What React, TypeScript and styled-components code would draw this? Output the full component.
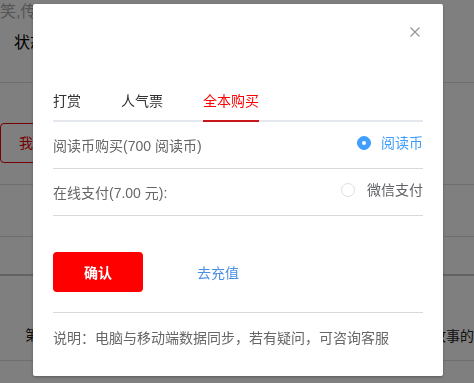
import React from "react";
import styled, { createGlobalStyle } from "styled-components";

const Global = createGlobalStyle`
  html, body { margin: 0; padding: 0; }
  body {
    font-family: "Liberation Sans", "Noto Sans CJK SC", sans-serif;
    background: #fff;
  }
`;

const Page = styled.div`
  width: 474px;
  height: 383px;
  overflow: hidden;
  background: #fff;
  display: flex;
  flex-direction: column;
  & > * { flex-shrink: 0; }
`;

const PageHeader = styled.div`
  height: 82px;
  border-bottom: 1px solid #ddd;
  display: flex;
  flex-direction: column;
`;

const Intro = styled.div`
  height: 24px;
  line-height: 24px;
  font-size: 16px;
  color: #aaa;
  white-space: nowrap;
`;

const Status = styled.div`
  margin-top: 8px;
  padding-left: 14px;
  height: 22px;
  line-height: 22px;
  font-size: 16px;
  color: #000;
`;

const TabSection = styled.div`
  padding-top: 40px;
  height: 61px;
`;

const ChapterTab = styled.div`
  width: 120px;
  height: 38px;
  border: 1px solid #e00;
  border-radius: 4px;
  box-sizing: content-box;
  padding-left: 18px;
  line-height: 38px;
  font-size: 14px;
  color: #e00;
`;

const ListRow = styled.div<{ $h: number; $thick?: boolean }>`
  height: ${(p) => p.$h}px;
  border-top: ${(p) => (p.$thick ? 2 : 1)}px solid ${(p) => (p.$thick ? "#c4c4c4" : "#ddd")};
  display: flex;
  justify-content: space-between;
  align-items: flex-end;
  font-size: 14px;
  color: #222;
  white-space: nowrap;
`;

const ChapterTitle = styled.span`
  padding-left: 25px;
  line-height: 20px;
  margin-bottom: 15px;
`;

const ChapterTail = styled.span`
  line-height: 20px;
  margin-bottom: 14px;
`;

const Overlay = styled.div`
  position: fixed;
  inset: 0;
  background: rgba(0, 0, 0, 0.5);
`;

const Dialog = styled.div`
  position: fixed;
  left: 33px;
  top: 4px;
  width: 410px;
  height: 372px;
  box-sizing: border-box;
  background: #fff;
  border-radius: 2px;
  box-shadow: 0 1px 3px rgba(0, 0, 0, 0.3);
  display: flex;
  flex-direction: column;
  font-family: "Liberation Sans", "Noto Sans CJK SC", sans-serif;
`;

const DialogHeader = styled.div`
  height: 78px;
  box-sizing: border-box;
  padding: 23px 23px 0;
  display: flex;
  justify-content: flex-end;
  align-items: flex-start;
`;

const CloseButton = styled.button`
  width: 10px;
  height: 10px;
  padding: 0;
  border: 0;
  background: transparent;
  display: flex;
  cursor: pointer;
`;

const DialogBody = styled.div`
  padding: 0 20px;
  display: flex;
  flex-direction: column;
`;

const TabsBar = styled.div`
  display: flex;
  height: 40px;
  box-shadow: inset 0 -2px 0 #e4e7ed;
`;

const TabItem = styled.div`
  padding: 0 20px;
  &:first-child { padding-left: 0; }
  &:last-child { padding-right: 0; }
`;

const TabLabel = styled.div<{ $active?: boolean }>`
  height: 38px;
  line-height: 38px;
  font-size: 14px;
  color: ${(p) => (p.$active ? "#f00" : "#303133")};
  border-bottom: 2px solid ${(p) => (p.$active ? "#c8161d" : "transparent")};
`;

const PayRow = styled.div`
  height: 47px;
  box-sizing: border-box;
  border-bottom: 1px solid #d9d9d9;
  display: flex;
  justify-content: space-between;
  align-items: flex-start;
`;

const PayLabel = styled.span`
  padding-top: 14px;
  line-height: 20px;
  font-size: 14px;
  color: #666;
`;

const RadioOption = styled.label<{ $checked?: boolean; $gap: number }>`
  padding-top: 11px;
  display: flex;
  align-items: center;
  gap: ${(p) => p.$gap}px;
  line-height: 20px;
  font-size: 14px;
  color: ${(p) => (p.$checked ? "#409eff" : "#606266")};
  cursor: pointer;
`;

const RadioCircle = styled.span<{ $checked?: boolean }>`
  width: 14px;
  height: 14px;
  box-sizing: border-box;
  border-radius: 50%;
  border: 1px solid ${(p) => (p.$checked ? "#409eff" : "#dcdfe6")};
  background: ${(p) => (p.$checked ? "#409eff" : "#fff")};
  display: flex;
  align-items: center;
  justify-content: center;
  &::after {
    content: "";
    width: 4px;
    height: 4px;
    border-radius: 50%;
    background: #fff;
    display: ${(p) => (p.$checked ? "block" : "none")};
  }
`;

const Actions = styled.div`
  margin-top: 36px;
  display: flex;
  gap: 30px;
`;

const ActionButton = styled.button<{ $primary?: boolean }>`
  width: 90px;
  height: 40px;
  padding: 0;
  border: 0;
  border-radius: 4px;
  background: ${(p) => (p.$primary ? "#f00" : "transparent")};
  color: ${(p) => (p.$primary ? "#fff" : "#4a90e2")};
  font-family: "Liberation Sans", "Noto Sans CJK SC", sans-serif;
  font-size: 14px;
  font-weight: ${(p) => (p.$primary ? 700 : 400)};
  cursor: pointer;
`;

const Note = styled.div`
  margin-top: 20px;
  border-top: 1px solid #d9d9d9;
  padding-top: 15px;
  line-height: 20px;
  font-size: 14px;
  color: #666;
`;

export default function App() {
  return (
    <>
      <Global />
      <Page>
        <PageHeader>
          <Intro>笑,传</Intro>
          <Status>状态</Status>
        </PageHeader>
        <TabSection>
          <ChapterTab>我的</ChapterTab>
        </TabSection>
        <ListRow $h={51} />
        <ListRow $h={37} />
        <ListRow $h={84} $thick>
          <ChapterTitle>第一</ChapterTitle>
          <ChapterTail>故事的</ChapterTail>
        </ListRow>
        <ListRow $h={30} />
      </Page>
      <Overlay />
      <Dialog>
        <DialogHeader>
          <CloseButton aria-label="关闭">
            <svg width="10" height="10" viewBox="0 0 10 10">
              <path d="M0.5 0.5 L9.5 9.5 M9.5 0.5 L0.5 9.5" stroke="#909399" strokeWidth="1.1" fill="none" />
            </svg>
          </CloseButton>
        </DialogHeader>
        <DialogBody>
          <TabsBar>
            <TabItem><TabLabel>打赏</TabLabel></TabItem>
            <TabItem><TabLabel>人气票</TabLabel></TabItem>
            <TabItem><TabLabel $active>全本购买</TabLabel></TabItem>
          </TabsBar>
          <PayRow>
            <PayLabel>阅读币购买(700 阅读币)</PayLabel>
            <RadioOption $checked $gap={10}>
              <RadioCircle $checked />
              阅读币
            </RadioOption>
          </PayRow>
          <PayRow>
            <PayLabel>在线支付(7.00 元):</PayLabel>
            <RadioOption $gap={12}>
              <RadioCircle />
              微信支付
            </RadioOption>
          </PayRow>
          <Actions>
            <ActionButton $primary>确认</ActionButton>
            <ActionButton>去充值</ActionButton>
          </Actions>
          <Note>说明：电脑与移动端数据同步，若有疑问，可咨询客服</Note>
        </DialogBody>
      </Dialog>
    </>
  );
}
